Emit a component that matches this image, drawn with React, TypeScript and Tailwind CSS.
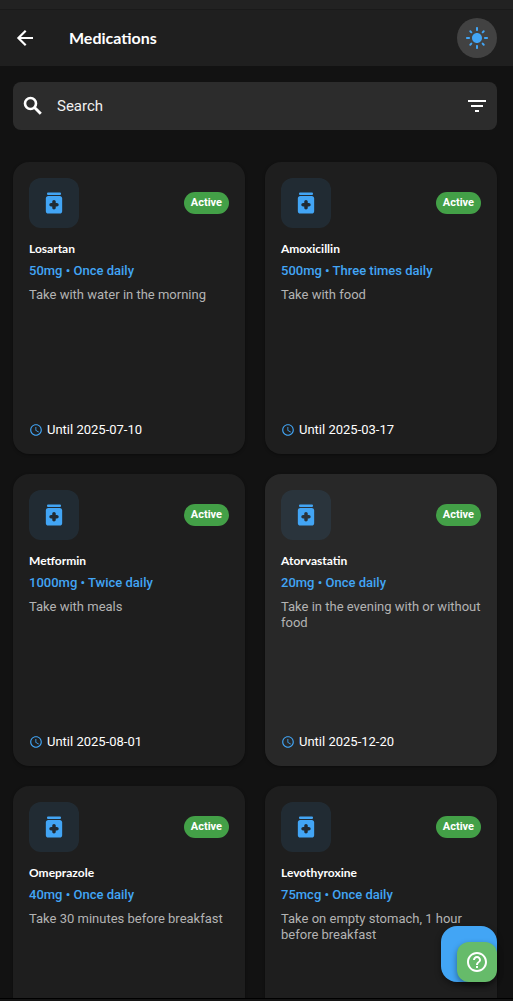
import { MdAccessTime, MdFilterList, MdHelpOutline, MdLightMode } from "react-icons/md";

type Medication = {
  name: string;
  dose: string;
  frequency: string;
  note: string;
  until: string;
  highlighted?: boolean;
};

const medications: Medication[] = [
  { name: "Losartan", dose: "50mg", frequency: "Once daily", note: "Take with water in the morning", until: "2025-07-10" },
  { name: "Amoxicillin", dose: "500mg", frequency: "Three times daily", note: "Take with food", until: "2025-03-17" },
  { name: "Metformin", dose: "1000mg", frequency: "Twice daily", note: "Take with meals", until: "2025-08-01" },
  { name: "Atorvastatin", dose: "20mg", frequency: "Once daily", note: "Take in the evening with or without food", until: "2025-12-20", highlighted: true },
  { name: "Omeprazole", dose: "40mg", frequency: "Once daily", note: "Take 30 minutes before breakfast", until: "2025-06-15" },
  { name: "Levothyroxine", dose: "75mcg", frequency: "Once daily", note: "Take on empty stomach, 1 hour before breakfast", until: "2025-11-30" },
];

function BackIcon() {
  return (
    <svg viewBox="0 0 24 24" fill="none" stroke="currentColor" strokeWidth="2.2" aria-hidden="true" className="size-6">
      <path d="M20 12H5.500M12.700 4.700L5.400 12l7.300 7.300" />
    </svg>
  );
}

function SearchIcon() {
  return (
    <svg viewBox="0 0 24 24" fill="none" stroke="currentColor" aria-hidden="true" className="size-6">
      <circle cx="9.500" cy="9.500" r="5.500" strokeWidth="2.600" />
      <path d="M13.500 13.500l6.300 6.300" strokeWidth="2.900" />
    </svg>
  );
}

function BottleIcon() {
  return (
    <svg viewBox="0 0 24 24" fill="currentColor" aria-hidden="true" className="size-7">
      <rect x="6" y="3" width="12" height="2.1" rx="0.9" />
      <path
        fillRule="evenodd"
        d="M7 6h10c1.1 0 2 .9 2 2v11c0 1.1-.9 2-2 2H7c-1.1 0-2-.9-2-2V8c0-1.1.9-2 2-2zm5 3.5c-.83 0-1.5.67-1.5 1.5v1h-1c-.83 0-1.5.67-1.5 1.5s.67 1.5 1.5 1.5h1v1c0 .83.67 1.5 1.5 1.5s1.5-.67 1.5-1.5v-1h1c.83 0 1.5-.67 1.5-1.5s-.67-1.5-1.5-1.5h-1v-1c0-.83-.67-1.5-1.5-1.5z"
      />
    </svg>
  );
}

function MedicationCard({ item }: { item: Medication }) {
  return (
    <li
      className={`flex min-h-[292px] flex-col rounded-2xl p-4 shadow-[0_1px_3px_rgba(0,0,0,0.35)] ${
        item.highlighted ? "bg-[#282828]" : "bg-[#1e1e1e]"
      }`}
    >
      <div className="flex items-center justify-between">
        <span className="flex size-[50px] items-center justify-center rounded-xl bg-[#42a5f5]/10 text-[#42a5f5]">
          <BottleIcon />
        </span>
        <span className="rounded-full bg-[#43a047] px-[7px] py-[3px] text-[11px] leading-4 font-bold text-white">
          Active
        </span>
      </div>
      <h2 className="mt-3 font-[Lato,sans-serif] text-xs leading-[18px] font-bold text-white">{item.name}</h2>
      <p className="mt-1 text-[13px] leading-[18px] font-medium text-[#42a5f5]">
        {item.dose} • {item.frequency}
      </p>
      <p className="mt-[7px] text-[13px] leading-4 text-[#b3b3b3]">{item.note}</p>
      <p className="mt-auto flex items-center gap-1 text-[13px] leading-4 text-white">
        <MdAccessTime size={14} className="text-[#42a5f5]" />
        Until {item.until}
      </p>
    </li>
  );
}

export default function App() {
  return (
    <div className="relative flex h-screen flex-col overflow-hidden bg-[#121212] font-[Roboto,sans-serif]">
      <div className="h-[10px] shrink-0 border-b border-[#1a1a1a] bg-[#222222]" />
      <header className="flex h-14 shrink-0 items-center bg-[#1f1f1f] pr-4 pl-[13px]">
        <button type="button" aria-label="Back" className="text-white">
          <BackIcon />
        </button>
        <h1 className="ml-8 flex-1 font-[Lato,sans-serif] text-base font-bold text-white">Medications</h1>
        <button
          type="button"
          aria-label="Light mode"
          className="flex size-10 items-center justify-center rounded-full bg-[#424242] text-[#42a5f5]"
        >
          <MdLightMode size={24} />
        </button>
      </header>

      <main className="min-h-0 flex-1 overflow-y-auto pt-4 pr-4 pl-[13px] [scrollbar-width:none]">
        <div className="flex h-12 items-center rounded-lg bg-[#2c2c2c] px-2">
          <label htmlFor="search" aria-label="Search" className="text-white">
            <SearchIcon />
          </label>
          <input
            id="search"
            type="text"
            placeholder="Search"
            className="ml-3 min-w-0 flex-1 bg-transparent text-[15px] text-white outline-none placeholder:text-[#f0f0f0]"
          />
          <button type="button" aria-label="Filter" className="text-white">
            <MdFilterList size={24} />
          </button>
        </div>
        <ul className="mt-8 grid grid-cols-2 gap-5">
          {medications.map((item) => (
            <MedicationCard key={item.name} item={item} />
          ))}
        </ul>
      </main>
      <div className="h-[3px] shrink-0 border-t border-black bg-[#141414]" />

      <button
        type="button"
        aria-label="Add medication"
        className="absolute right-4 bottom-[19px] size-14 rounded-2xl bg-[#42a5f5] shadow-[0_3px_6px_rgba(0,0,0,0.4)]"
      />
      <button
        type="button"
        aria-label="Help"
        className="absolute right-4 bottom-[19px] flex size-10 items-center justify-center rounded-xl bg-[#66bb6a] text-white shadow-[0_3px_6px_rgba(0,0,0,0.4)]"
      >
        <MdHelpOutline size={24} />
      </button>
    </div>
  );
}
